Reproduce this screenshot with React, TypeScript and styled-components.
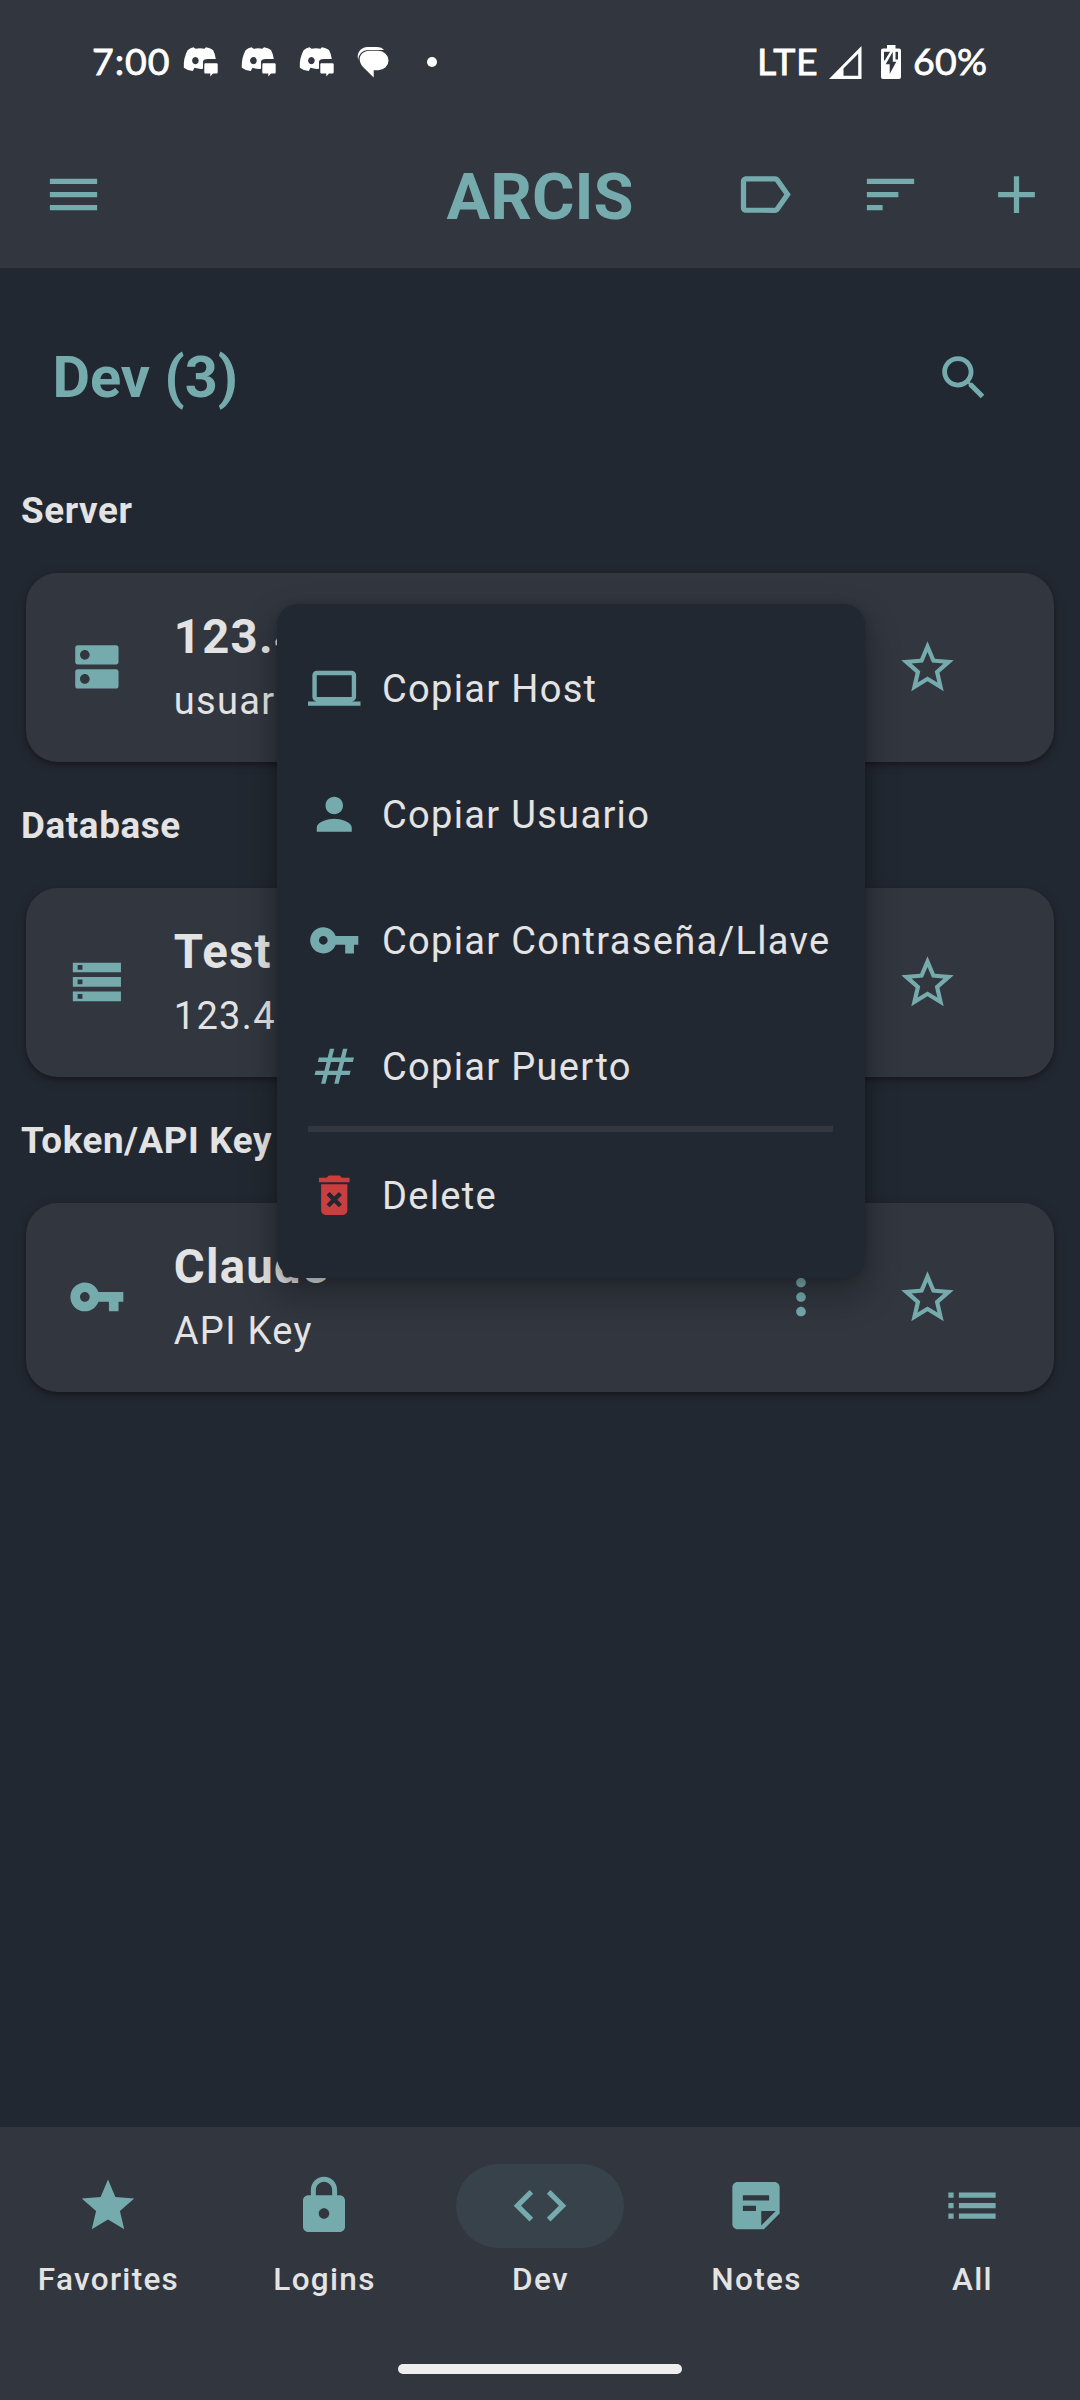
import React from "react";
import styled, { createGlobalStyle } from "styled-components";

const color = {
  surface: "#31363f",
  background: "#222831",
  accent: "#76abae",
  text: "#e4e3e3",
  danger: "#c93f3f",
  pill: "#38424a",
};

const GlobalStyle = createGlobalStyle`
  * { box-sizing: border-box; }
  body { margin: 0; background: ${color.background}; }
`;

const Screen = styled.div`
  position: relative;
  display: flex;
  flex-direction: column;
  width: 1080px;
  height: 2400px;
  overflow: hidden;
  background: ${color.background};
  color: ${color.text};
  font-family: Roboto, "Noto Sans", sans-serif;
`;

const StatusBar = styled.header`
  display: flex;
  align-items: center;
  justify-content: space-between;
  height: 121px;
  padding: 3px 93px 0 92px;
  background: ${color.surface};
  color: #fff;
  font-family: Lato, "Open Sans", sans-serif;
  font-size: 37.5px;
  line-height: 48px;
`;

const StatusGroup = styled.div<{ $gap: number }>`
  display: flex;
  align-items: center;
  gap: ${(p) => p.$gap}px;
`;

const StatusText = styled.span<{ $width: number; $spacing?: number }>`
  width: ${(p) => p.$width}px;
  margin-bottom: 2px;
  letter-spacing: ${(p) => p.$spacing ?? 0}px;
  white-space: nowrap;
  -webkit-text-stroke: 0.8px #fff;
`;

const Dot = styled.span`
  width: 10px;
  height: 10px;
  margin-left: 15px;
  border-radius: 50%;
  background: #fff;
`;

const SignalSlot = styled.span`
  display: flex;
  margin-right: 7px;
`;

const AppBar = styled.div`
  display: grid;
  grid-template-columns: 378px 1fr 378px;
  align-items: center;
  height: 147px;
  background: ${color.surface};
`;

const AppTitle = styled.h1`
  margin: 0;
  padding-top: 4px;
  text-align: center;
  color: ${color.accent};
  font-size: 65px;
  font-weight: 700;
  line-height: 74px;
`;

const IconButton = styled.button<{ $width?: number }>`
  display: flex;
  align-items: center;
  justify-content: center;
  flex: none;
  width: ${(p) => p.$width ?? 126}px;
  height: 126px;
  padding: 0;
  border: 0;
  background: none;
  color: inherit;
`;

const Actions = styled.div`
  display: flex;
  margin-left: -1px;
`;

const Glyph = styled.svg<{ $size: number; $tone?: string }>`
  display: block;
  flex: none;
  width: ${(p) => p.$size}px;
  height: ${(p) => p.$size}px;
  fill: ${(p) => p.$tone ?? color.accent};
`;

const Content = styled.main`
  flex: 1;
  display: flex;
  flex-direction: column;
`;

const Heading = styled.div`
  display: flex;
  align-items: center;
  justify-content: space-between;
  height: 178.5px;
  padding: 42px 53px 0 52.5px;
  color: ${color.accent};
`;

const HeadingText = styled.h2`
  margin: 0 0 2px;
  font-size: 57.75px;
  font-weight: 700;
  line-height: 68px;
`;

const SectionLabel = styled.h3`
  display: flex;
  align-items: center;
  height: 126px;
  margin: 0;
  padding: 2px 21px 0;
  font-size: 36.75px;
  font-weight: 700;
  letter-spacing: 0.62px;
`;

const Card = styled.article`
  display: flex;
  align-items: center;
  height: 189px;
  margin: 0 26px;
  padding: 0 64px 0 42px;
  border-radius: 31.5px;
  background: ${color.surface};
  box-shadow: 0 3px 5px rgba(0, 0, 0, 0.3), 0 2px 10px 2px rgba(30, 25, 35, 0.22);
`;

const CardText = styled.div`
  flex: 1;
  padding: 2px 0 0 48px;
  white-space: nowrap;
`;

const CardTitle = styled.div`
  font-size: 47.25px;
  font-weight: 700;
  line-height: 64px;
  letter-spacing: 1.3px;
`;

const CardSubtitle = styled.div`
  padding-top: 1px;
  margin-bottom: -1px;
  font-size: 38.06px;
  line-height: 63px;
  letter-spacing: 1.3px;
`;

const Menu = styled.div`
  position: absolute;
  left: 277px;
  top: 604px;
  width: 588px;
  padding: 21px 32px 20px 31px;
  border-radius: 21px;
  background: ${color.background};
  box-shadow: 0 16px 32px 4px rgba(0, 0, 0, 0.25), 0 2px 8px rgba(0, 0, 0, 0.18);
`;

const MenuItem = styled.div`
  display: flex;
  align-items: center;
  gap: 21.5px;
  height: 126px;
  font-size: 38.06px;
  letter-spacing: 1.3px;
  white-space: nowrap;
`;

const MenuLabel = styled.span`
  padding-top: 1px;
  line-height: 46px;
`;

const MenuDivider = styled.div`
  height: 6px;
  margin: -3px 0 0;
  background: ${color.surface};
`;

const BottomNav = styled.nav`
  display: grid;
  grid-template-columns: repeat(5, 1fr);
  height: 210px;
  padding-top: 37px;
  background: ${color.surface};
`;

const NavItem = styled.div`
  display: flex;
  flex-direction: column;
  align-items: center;
`;

const NavPill = styled.div<{ $active: boolean }>`
  display: flex;
  align-items: center;
  justify-content: center;
  width: 168px;
  height: 84px;
  border-radius: 42px;
  background: ${(p) => (p.$active ? color.pill : "transparent")};
`;

const NavLabel = styled.span`
  margin-top: 11px;
  padding-left: 1px;
  font-size: 31.5px;
  font-weight: 500;
  line-height: 42px;
  letter-spacing: 1.3px;
`;

const GestureArea = styled.footer`
  display: flex;
  justify-content: center;
  height: 63px;
  padding-top: 27px;
  background: ${color.surface};
`;

const GestureBar = styled.div`
  width: 284px;
  height: 10px;
  border-radius: 5px;
  background: #eeeeee;
`;

const paths = {
  menu: "M3 18h18v-2H3v2zm0-5h18v-2H3v2zm0-7v2h18V6H3z",
  label:
    "M17.63 5.84C17.27 5.33 16.67 5 16 5L5 5.01C3.9 5.01 3 5.9 3 7v10c0 1.1.9 1.99 2 1.99L16 19c.67 0 1.27-.33 1.63-.84L22 12l-4.37-6.16zM16 17H5V7h11l3.55 5L16 17z",
  sort: "M3 18h6v-2H3v2zM3 6v2h18V6H3zm0 7h12v-2H3v2z",
  add: "M19 13h-6v6h-2v-6H5v-2h6V5h2v6h6v2z",
  search:
    "M15.5 14h-.79l-.28-.27C15.41 12.59 16 11.11 16 9.5 16 5.91 13.09 3 9.5 3S3 5.91 3 9.5 5.91 16 9.5 16c1.61 0 3.09-.59 4.23-1.57l.27.28v.79l5 4.99L20.49 19l-4.99-5zm-6 0C7.01 14 5 11.99 5 9.5S7.01 5 9.5 5 14 7.01 14 9.5 11.99 14 9.5 14z",
  dns: "M20 13H4c-.55 0-1 .45-1 1v6c0 .55.45 1 1 1h16c.55 0 1-.45 1-1v-6c0-.55-.45-1-1-1zM7 19c-1.1 0-2-.9-2-2s.9-2 2-2 2 .9 2 2-.9 2-2 2zM20 3H4c-.55 0-1 .45-1 1v6c0 .55.45 1 1 1h16c.55 0 1-.45 1-1V4c0-.55-.45-1-1-1zM7 9c-1.1 0-2-.9-2-2s.9-2 2-2 2 .9 2 2-.9 2-2 2z",
  storage:
    "M2 20h20v-4H2v4zm2-3h2v2H4v-2zM2 4v4h20V4H2zm4 3H4V5h2v2zm-4 7h20v-4H2v4zm2-3h2v2H4v-2z",
  key: "M12.65 10C11.83 7.67 9.61 6 7 6c-3.31 0-6 2.69-6 6s2.69 6 6 6c2.61 0 4.83-1.67 5.65-4H17v4h4v-4h2v-4H12.65zM7 14c-1.1 0-2-.9-2-2s.9-2 2-2 2 .9 2 2-.9 2-2 2z",
  more: "M12 8c1.1 0 2-.9 2-2s-.9-2-2-2-2 .9-2 2 .9 2 2 2zm0 2c-1.1 0-2 .9-2 2s.9 2 2 2 2-.9 2-2-.9-2-2-2zm0 6c-1.1 0-2 .9-2 2s.9 2 2 2 2-.9 2-2-.9-2-2-2z",
  starOutline:
    "M22 9.24l-7.19-.62L12 2 9.19 8.63 2 9.24l5.46 4.73L5.82 21 12 17.27 18.18 21l-1.63-7.03L22 9.24zM12 15.4l-3.76 2.27 1-4.28-3.32-2.88 4.38-.38L12 6.1l1.71 4.04 4.38.38-3.32 2.88 1 4.28L12 15.4z",
  laptop:
    "M20 18c1.1 0 1.99-.9 1.99-2L22 6c0-1.1-.9-2-2-2H4c-1.1 0-2 .9-2 2v10c0 1.1.9 2 2 2H0v2h24v-2h-4zM4 6h16v10H4V6z",
  person:
    "M12 12c2.21 0 4-1.79 4-4s-1.79-4-4-4-4 1.79-4 4 1.79 4 4 4zm0 2c-2.67 0-8 1.34-8 4v2h16v-2c0-2.66-5.33-4-8-4z",
  numbers:
    "M20.5 10l.5-2h-4l1-4h-2l-1 4h-4l1-4h-2L9 8H5l-.5 2h4l-1 4h-4L3 16h4l-1 4h2l1-4h4l-1 4h2l1-4h4l.5-2h-4l1-4h4zm-7 4h-4l1-4h4l-1 4z",
  trash:
    "M6 19c0 1.1.9 2 2 2h8c1.1 0 2-.9 2-2V7H6v12zm2.46-7.12l1.41-1.41L12 12.59l2.12-2.12 1.41 1.41L13.41 14l2.12 2.12-1.41 1.41L12 15.41l-2.12 2.12-1.41-1.41L10.59 14l-2.13-2.12zM15.5 4l-1-1h-5l-1 1H5v2h14V4h-3.5z",
  star: "M12 17.27L18.18 21l-1.64-7.03L22 9.24l-7.19-.61L12 2 9.19 8.63 2 9.24l5.46 4.73L5.82 21z",
  lock: "M18 8h-1V6c0-2.76-2.24-5-5-5S7 3.24 7 6v2H6c-1.1 0-2 .9-2 2v10c0 1.1.9 2 2 2h12c1.1 0 2-.9 2-2V10c0-1.1-.9-2-2-2zm-6 9c-1.1 0-2-.9-2-2s.9-2 2-2 2 .9 2 2-.9 2-2 2zm3.1-9H8.9V6c0-1.71 1.39-3.1 3.1-3.1 1.71 0 3.1 1.39 3.1 3.1v2z",
  code: "M9.4 16.6L4.8 12l4.6-4.6L8 6l-6 6 6 6 1.4-1.4zm5.2 0l4.6-4.6-4.6-4.6L16 6l6 6-6 6-1.4-1.4z",
  note: "M19 3H5c-1.1 0-2 .9-2 2v14c0 1.1.9 2 2 2h10l6-6V5c0-1.1-.9-2-2-2zM7 8h10v2H7V8zm5 6H7v-2h5v2zm2 5.5V14h5.5L14 19.5z",
  list: "M3 13h2v-2H3v2zm0 4h2v-2H3v2zm0-8h2V7H3v2zm4 4h14v-2H7v2zm0 4h14v-2H7v2zM7 7v2h14V7H7z",
};

type IconName = keyof typeof paths;

function Icon({
  name,
  size,
  tone,
  viewBox = "0 0 24 24",
}: {
  name: IconName;
  size: number;
  tone?: string;
  viewBox?: string;
}) {
  return (
    <Glyph viewBox={viewBox} $size={size} $tone={tone} aria-hidden>
      <path fillRule="evenodd" d={paths[name]} />
    </Glyph>
  );
}

function DiscordIcon() {
  return (
    <svg width="35" height="30" viewBox="0 0 35 30" fill="#fff">
      <path
        fillRule="evenodd"
        d="M10.5.3 12.5 1.8Q17 .9 21.500 1.8L23 .3Q27 .8 30 3Q32.200 7 32.800 12H24.500Q21 12 20 14V21.800Q16 22.300 11.500 20.800L9.800 24Q4 23.500 .8 20.800Q.3 11 4.600 3.200Q7.300 1 10.500.3ZM12.400 10A3.300 3.600 0 1 0 12.410 10Z"
      />
      <path d="M22.300 16.300H33.500Q34.700 16.300 34.700 17.500V25.300Q34.700 26.500 33.500 26.500H30L27.300 29.500V26.500H22.300Q21.300 26.500 21.300 25.300V17.500Q21.300 16.300 22.300 16.300Z" />
    </svg>
  );
}

function MessagesIcon() {
  return (
    <svg width="32" height="31" viewBox="0 0 32 31" fill="#fff">
      <path d="M1.300 13C-1 6 4 .3 10.500 .1H20.500Q25 .3 27 2.900H12C5 3 1.300 7.500 1.300 13Z" />
      <path d="M12.500 3.800H21.500A10 9.700 0 0 1 21.500 23.200H16.700V30.500L6 20C-1 12 4 3.800 12.500 3.800Z" />
    </svg>
  );
}

function SignalIcon() {
  return (
    <svg width="33" height="33" viewBox="0 0 33 33" fill="#fff">
      <path fillRule="evenodd" d="M0 33 32.500 0V33ZM14.500 29.700H29.200V7.800L14.500 22.500Z" />
    </svg>
  );
}

function BatteryIcon() {
  return (
    <svg width="20" height="34" viewBox="0 0 20 34">
      <path fill="#fff" d="M6 0h8.500v3.500H18a2 2 0 0 1 2 2V32a2 2 0 0 1-2 2H2a2 2 0 0 1-2-2V5.500a2 2 0 0 1 2-2h4z" />
      <path fill={color.surface} d="M3 6.800h14v8.800H3z" />
      <path fill="#fff" d="M9.500 6 2.500 17.500h15l.5-3h-3.500V6z" />
      <path fill={color.surface} d="M11.800 6.800 4.700 19.300H8.700V29L15.300 16.700H11.800z" />
    </svg>
  );
}

const sections: { label: string; icon: IconName; title: string; subtitle: string }[] = [
  { label: "Server", icon: "dns", title: "123.4", subtitle: "usuario" },
  { label: "Database", icon: "storage", title: "Test", subtitle: "123.4" },
  { label: "Token/API Key", icon: "key", title: "Claude", subtitle: "API Key" },
];

const menuItems: { icon: IconName; label: string }[] = [
  { icon: "laptop", label: "Copiar Host" },
  { icon: "person", label: "Copiar Usuario" },
  { icon: "key", label: "Copiar Contraseña/Llave" },
  { icon: "numbers", label: "Copiar Puerto" },
];

const tabs: { icon: IconName; label: string }[] = [
  { icon: "star", label: "Favorites" },
  { icon: "lock", label: "Logins" },
  { icon: "code", label: "Dev" },
  { icon: "note", label: "Notes" },
  { icon: "list", label: "All" },
];

export default function App() {
  return (
    <Screen>
      <GlobalStyle />
      <StatusBar>
        <StatusGroup $gap={23}>
          <StatusText $width={68} $spacing={1}>7:00</StatusText>
          <DiscordIcon />
          <DiscordIcon />
          <DiscordIcon />
          <MessagesIcon />
          <Dot />
        </StatusGroup>
        <StatusGroup $gap={12}>
          <StatusText $width={60} $spacing={0.6}>LTE</StatusText>
          <SignalSlot>
            <SignalIcon />
          </SignalSlot>
          <BatteryIcon />
          <StatusText $width={74} $spacing={0.3}>60%</StatusText>
        </StatusGroup>
      </StatusBar>
      <AppBar>
        <IconButton $width={147}>
          <Icon name="menu" size={63} />
        </IconButton>
        <AppTitle>ARCIS</AppTitle>
        <Actions>
          <IconButton>
            <Icon name="label" size={63} />
          </IconButton>
          <IconButton>
            <Icon name="sort" size={63} />
          </IconButton>
          <IconButton>
            <Icon name="add" size={63} />
          </IconButton>
        </Actions>
      </AppBar>
      <Content>
        <Heading>
          <HeadingText>Dev (3)</HeadingText>
          <IconButton>
            <Icon name="search" size={57.75} />
          </IconButton>
        </Heading>
        {sections.map((s) => (
          <section key={s.label}>
            <SectionLabel>{s.label}</SectionLabel>
            <Card>
              <Icon name={s.icon} size={57.75} />
              <CardText>
                <CardTitle>{s.title}</CardTitle>
                <CardSubtitle>{s.subtitle}</CardSubtitle>
              </CardText>
              <IconButton>
                <Icon name="more" size={58} />
              </IconButton>
              <IconButton>
                <Icon name="starOutline" size={63} />
              </IconButton>
            </Card>
          </section>
        ))}
      </Content>
      <BottomNav>
        {tabs.map((t) => (
          <NavItem key={t.label}>
            <NavPill $active={t.label === "Dev"}>
              <Icon name={t.icon} size={64} viewBox="-0.19 -0.09 24.38 24.38" />
            </NavPill>
            <NavLabel>{t.label}</NavLabel>
          </NavItem>
        ))}
      </BottomNav>
      <GestureArea>
        <GestureBar />
      </GestureArea>
      <Menu>
        {menuItems.map((m) => (
          <MenuItem key={m.label}>
            <Icon name={m.icon} size={52.5} />
            <MenuLabel>{m.label}</MenuLabel>
          </MenuItem>
        ))}
        <MenuDivider />
        <MenuItem>
          <Icon name="trash" size={52.5} tone={color.danger} />
          <MenuLabel>Delete</MenuLabel>
        </MenuItem>
      </Menu>
    </Screen>
  );
}
